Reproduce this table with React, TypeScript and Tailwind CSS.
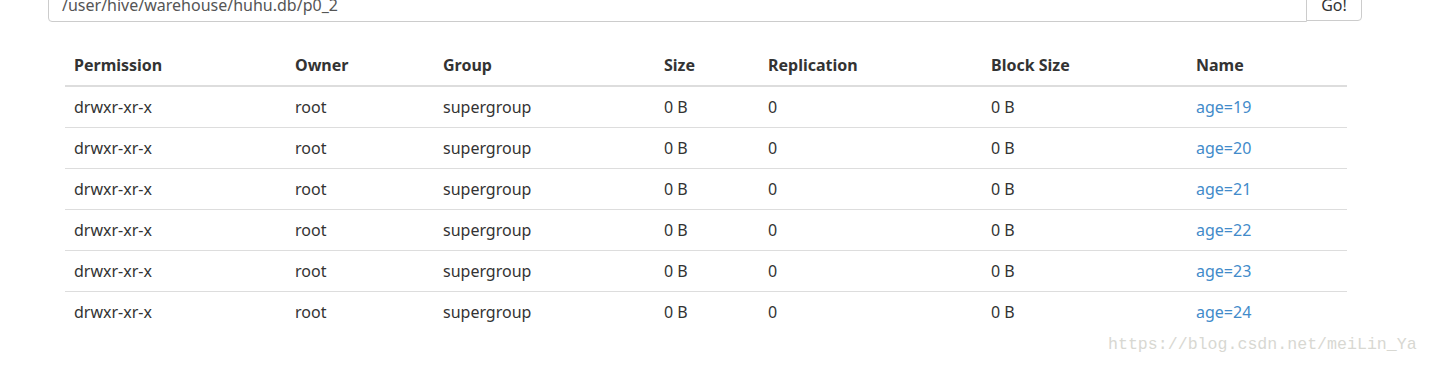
import React from 'react';

const columns = ['Permission', 'Owner', 'Group', 'Size', 'Replication', 'Block Size', 'Name'];
const widths = ['w-[221px]', 'w-[148px]', 'w-[221px]', 'w-[104px]', 'w-[223px]', 'w-[205px]', 'w-[160px]'];

const rows = [19, 20, 21, 22, 23, 24].map((age) => ({
  permission: 'drwxr-xr-x',
  owner: 'root',
  group: 'supergroup',
  size: '0 B',
  replication: '0',
  blockSize: '0 B',
  name: `age=${age}`,
}));

const App: React.FC = () => {
  return (
    <div className="relative h-[365px] w-[1429px] overflow-hidden bg-white font-['Noto_Sans',sans-serif] text-[16px] text-[#333]">
      {/* path input, scrolled partly out of view */}
      <div className="ml-[48px] -mt-[12px] flex w-[1314px]">
        <div className="flex h-[34px] flex-1 items-center rounded-l-[4px] border border-[#ccc] px-[13px] text-[#555]">
          /user/hive/warehouse/huhu.db/p0_2
        </div>
        <button className="-ml-px h-[33px] w-[56px] rounded-r-[4px] border border-[#ccc] bg-white text-[#333]">
          Go!
        </button>
      </div>

      <table className="ml-[65px] mt-[23px] w-[1282px] table-fixed border-collapse">
        <thead>
          <tr>
            {columns.map((c, i) => (
              <th
                key={c}
                className={`${widths[i]} border-b-2 border-[#ddd] px-[9px] py-[8px] text-left font-bold leading-[24px]`}
              >
                {c}
              </th>
            ))}
          </tr>
        </thead>
        <tbody>
          {rows.map((r, idx) => (
            <tr key={r.name} className={idx === 0 ? '' : 'border-t border-[#ddd]'}>
              <td className="px-[9px] py-[8px] leading-[24px]">{r.permission}</td>
              <td className="px-[9px] py-[8px] leading-[24px]">{r.owner}</td>
              <td className="px-[9px] py-[8px] leading-[24px]">{r.group}</td>
              <td className="px-[9px] py-[8px] leading-[24px]">{r.size}</td>
              <td className="px-[9px] py-[8px] leading-[24px]">{r.replication}</td>
              <td className="px-[9px] py-[8px] leading-[24px]">{r.blockSize}</td>
              <td className="px-[9px] py-[8px] leading-[24px]">
                <a href="#" className="text-[#428bca]">
                  {r.name}
                </a>
              </td>
            </tr>
          ))}
        </tbody>
      </table>

      {/* watermark */}
      <div className="absolute left-[1108px] top-[333px] font-['Liberation_Mono',monospace] text-[16.6px] leading-[24px] text-[#d8d8d2]">
        https://blog.csdn.net/meiLin_Ya
      </div>
    </div>
  );
};

export default App;
